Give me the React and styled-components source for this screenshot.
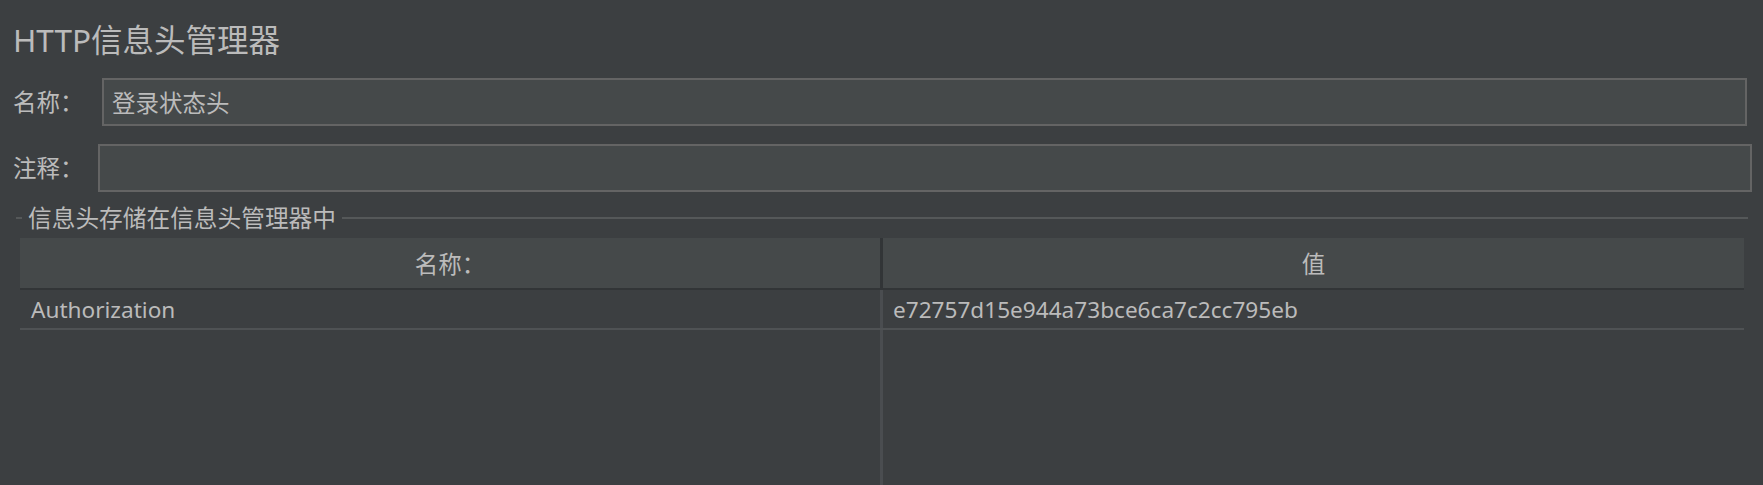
import React from "react";
import styled, { createGlobalStyle } from "styled-components";

const GlobalStyle = createGlobalStyle`
  html, body { margin: 0; padding: 0; background: #3c3f41; }
  body {
    font-family: "Noto Sans", "Noto Sans CJK SC", sans-serif;
    color: #bbbbbb;
  }
  * { box-sizing: border-box; }
`;

const Page = styled.div`
  height: 100vh;
  display: flex;
  flex-direction: column;
  overflow: hidden;
`;

const Title = styled.h1`
  margin: 0;
  padding: 20px 0 0 13px;
  font-size: 31.5px;
  font-weight: 400;
  line-height: 40px;
  color: #bbbbbb;
`;

const FieldRow = styled.div`
  display: flex;
  align-items: center;
  height: 48px;
  margin-top: ${(p) => p.$top}px;
  margin-right: ${(p) => p.$right}px;
`;

const Label = styled.label`
  flex: 0 0 ${(p) => p.$width}px;
  padding-left: 13px;
  font-size: 23.5px;
  line-height: 30px;
  white-space: nowrap;
`;

const TextInput = styled.input`
  flex: 1;
  height: 48px;
  border: 2px solid #646464;
  background: #45494a;
  color: #bbbbbb;
  font-family: inherit;
  font-size: 23.5px;
  padding: 0 8px;
  outline: none;
`;

const Group = styled.section`
  flex: 1;
  display: flex;
  flex-direction: column;
  margin: 12px 15px 0 16px;
  min-height: 0;
`;

const GroupHeader = styled.div`
  display: flex;
  align-items: center;
  gap: 6px;
  height: 28px;
`;

const GroupLine = styled.div`
  height: 2px;
  background: #555859;
  flex: ${(p) => (p.$grow ? 1 : "0 0 6px")};
`;

const GroupTitle = styled.span`
  font-size: 23.7px;
  line-height: 28px;
  white-space: nowrap;
`;

const Table = styled.div`
  flex: 1;
  display: flex;
  flex-direction: column;
  margin: 6px 4px 0 4px;
  min-height: 0;
`;

const HeaderRow = styled.div`
  display: grid;
  grid-template-columns: 863px 1fr;
  height: 52px;
  background: #45494a;
  border-bottom: 2px solid #323537;
`;

const HeaderCell = styled.div`
  display: flex;
  align-items: center;
  justify-content: center;
  font-size: 23.5px;
  border-right: ${(p) => (p.$last ? "none" : "3px solid #323537")};
`;

const BodyRow = styled.div`
  display: grid;
  grid-template-columns: 863px 1fr;
  height: 40px;
  border-bottom: 2px solid #4f5254;
`;

const Cell = styled.div`
  display: flex;
  align-items: center;
  padding-left: ${(p) => (p.$last ? 10 : 11)}px;
  font-size: 22.6px;
  border-right: ${(p) => (p.$last ? "none" : "3px solid #4a4d50")};
  white-space: nowrap;
  overflow: hidden;
`;

const Filler = styled.div`
  flex: 1;
  display: grid;
  grid-template-columns: 863px 1fr;
`;

const FillerCell = styled.div`
  border-right: ${(p) => (p.$last ? "none" : "3px solid #4a4d50")};
`;

const rows = [
  { name: "Authorization", value: "e72757d15e944a73bce6ca7c2cc795eb" },
];

export default function App() {
  return (
    <>
      <GlobalStyle />
      <Page>
        <Title>HTTP信息头管理器</Title>
        <FieldRow $top={18} $right={16}>
          <Label $width={102}>名称：</Label>
          <TextInput defaultValue="登录状态头" />
        </FieldRow>
        <FieldRow $top={18} $right={11}>
          <Label $width={98}>注释：</Label>
          <TextInput defaultValue="" />
        </FieldRow>
        <Group>
          <GroupHeader>
            <GroupLine />
            <GroupTitle>信息头存储在信息头管理器中</GroupTitle>
            <GroupLine $grow />
          </GroupHeader>
          <Table>
            <HeaderRow>
              <HeaderCell>名称：</HeaderCell>
              <HeaderCell $last>值</HeaderCell>
            </HeaderRow>
            {rows.map((r) => (
              <BodyRow key={r.name}>
                <Cell>{r.name}</Cell>
                <Cell $last>{r.value}</Cell>
              </BodyRow>
            ))}
            <Filler>
              <FillerCell />
              <FillerCell $last />
            </Filler>
          </Table>
        </Group>
      </Page>
    </>
  );
}
